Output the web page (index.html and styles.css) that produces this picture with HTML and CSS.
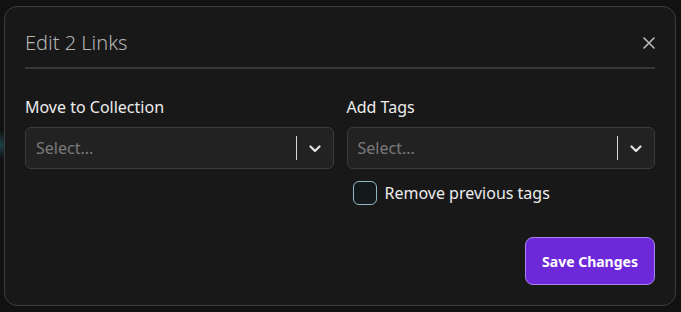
FILE: index.html
```html
<!DOCTYPE html>
<html>
<head>
    <meta charset="UTF-8">
    <meta name="viewport" content="width=device-width, initial-scale=1.0">
    <title>Edit 2 Links</title>
    <link rel="stylesheet" href="styles.css">
</head>
<body>
    <div class="modal">
        <div class="modal-header">
            <h2>Edit 2 Links</h2>
            <button class="close" aria-label="Close">
                <svg width="12" height="12" viewBox="0 0 12 12"><path d="M1 1L11 11M11 1L1 11" stroke="#bdbdbd" stroke-width="1.6" stroke-linecap="round"/></svg>
            </button>
        </div>

        <div class="fields">
            <!-- collection -->
            <div class="field">
                <label>Move to Collection</label>
                <div class="select">
                    <span class="placeholder">Select...</span>
                    <span class="divider"></span>
                    <span class="chevron">
                        <svg width="12" height="8" viewBox="0 0 12 8"><path d="M1.5 1.5L6 6L10.5 1.5" fill="none" stroke="#e0e0e0" stroke-width="2.2" stroke-linecap="round" stroke-linejoin="round"/></svg>
                    </span>
                </div>
            </div>

            <!-- tags -->
            <div class="field">
                <label>Add Tags</label>
                <div class="select">
                    <span class="placeholder">Select...</span>
                    <span class="divider"></span>
                    <span class="chevron">
                        <svg width="12" height="8" viewBox="0 0 12 8"><path d="M1.5 1.5L6 6L10.5 1.5" fill="none" stroke="#e0e0e0" stroke-width="2.2" stroke-linecap="round" stroke-linejoin="round"/></svg>
                    </span>
                </div>
                <div class="check-row">
                    <span class="checkbox"></span>
                    <span>Remove previous tags</span>
                </div>
            </div>
        </div>

        <div class="actions">
            <button class="save">Save Changes</button>
        </div>
    </div>
</body>
</html>
```

FILE: styles.css
```css
/* Global Styles */
* {
    margin: 0;
    padding: 0;
    box-sizing: border-box;
    font-family: 'Noto Sans', sans-serif;
}

body {
    background: radial-gradient(circle at 0 145px, rgba(40, 110, 120, 0.55), transparent 14px), #111111;
    color: #e8e8e8;
    height: 312px;
    padding: 6px 5px 6px 4px;
    overflow: hidden;
}

/* Modal */
.modal {
    height: 300px;
    background-color: #181818;
    border: 1px solid #3c3c3c;
    border-radius: 13px;
    padding: 20px 20px 19px 20px;
    display: flex;
    flex-direction: column;
}

.modal-header {
    display: flex;
    justify-content: space-between;
    align-items: center;
    border-bottom: 2px solid #363636;
    padding: 2px 0 10px 0;
}

.modal-header h2 {
    font-size: 20px;
    font-weight: 300;
    color: #b4b4b4;
    line-height: 28px;
}

.close {
    background: none;
    border: none;
    width: 16px;
    height: 16px;
    display: flex;
    align-items: center;
    justify-content: center;
    margin-right: -2px;
    cursor: pointer;
}

.fields {
    display: grid;
    grid-template-columns: 1fr 1fr;
    gap: 13px;
    margin-top: 27px;
}

.field label {
    display: block;
    font-size: 16px;
    line-height: 22px;
    color: #ececec;
    margin-bottom: 9px;
}

.select {
    height: 42px;
    background-color: #222222;
    border: 1px solid #3c3c3c;
    border-radius: 6px;
    display: flex;
    align-items: center;
    padding-left: 10px;
}

.placeholder {
    flex: 1;
    font-size: 16px;
    color: #7a7a7a;
}

.divider {
    width: 1px;
    height: 24px;
    background-color: #d8d8d8;
}

.chevron {
    width: 36px;
    display: flex;
    justify-content: center;
    padding-top: 1px;
}

.check-row {
    display: flex;
    align-items: center;
    gap: 8px;
    margin-top: 12px;
    padding-left: 6px;
    font-size: 16px;
    color: #ececec;
}

.checkbox {
    width: 24px;
    height: 24px;
    border: 1.5px solid #8fb9c4;
    border-radius: 6px;
    background-color: #14191b;
}

.actions {
    margin-top: auto;
    display: flex;
    justify-content: flex-end;
}

.save {
    width: 130px;
    height: 48px;
    margin-bottom: 1px;
    background-color: #6d28d9;
    color: #ffffff;
    border: 1px solid #a784f0;
    border-radius: 8px;
    font-size: 14px;
    font-weight: 700;
    cursor: pointer;
}
```
